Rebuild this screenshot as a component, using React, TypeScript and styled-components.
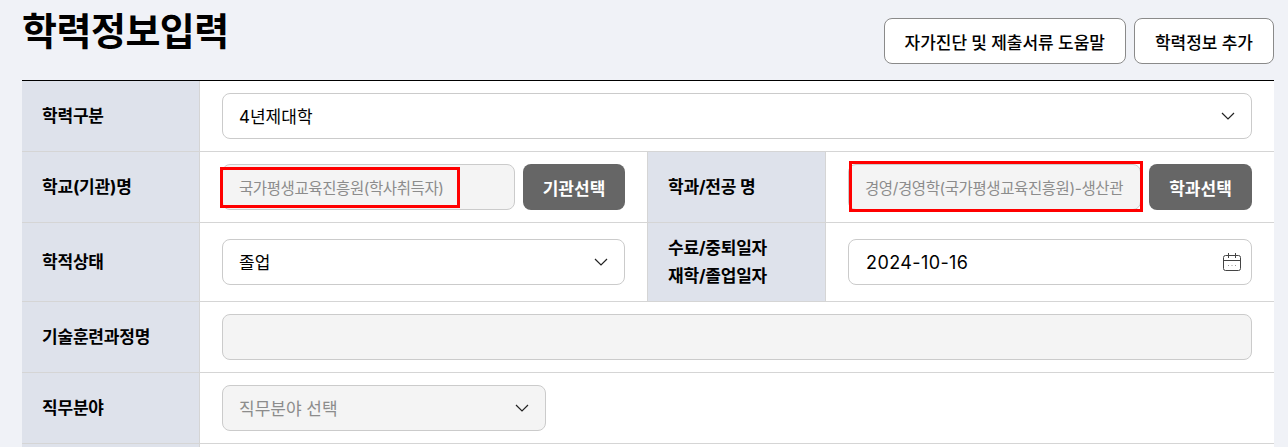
import { FC, ReactNode } from "react";
import styled, { createGlobalStyle } from "styled-components";

const Chevron: FC = () => (
  <svg width="14" height="8" viewBox="0 0 14 8" fill="none">
    <path d="M1 1l6 6 6-6" stroke="#222" strokeWidth="1.2" />
  </svg>
);

const CalendarIcon: FC = () => (
  <IconSlot>
    <svg width="18" height="20" viewBox="0 0 18 20" fill="none">
      <rect x="0.5" y="3.5" width="17" height="15" rx="2" stroke="#444" />
      <path d="M0.5 8.5h17M5.5 1v5M12.5 1v5" stroke="#444" />
      <path d="M5 13.5h1M8.5 13.5h1M12 13.5h1" stroke="#999" />
    </svg>
  </IconSlot>
);

type SelectProps = { children: ReactNode; disabled?: boolean; width?: number };

const Select: FC<SelectProps> = ({ children, disabled, width }) => (
  <Field $disabled={disabled} $spread $large style={width ? { flex: `0 0 ${width}px` } : undefined}>
    <SelectText>{children}</SelectText>
    <Chevron />
  </Field>
);

const App: FC = () => (
  <Page>
    <GlobalStyle />
    <Header>
      <Title>학력정보입력</Title>
      <Actions>
        <OutlineButton>자가진단 및 제출서류 도움말</OutlineButton>
        <OutlineButton>학력정보 추가</OutlineButton>
      </Actions>
    </Header>
    <Table>
      <Row>
        <Label>학력구분</Label>
        <Cell>
          <Select>4년제대학</Select>
        </Cell>
      </Row>
      <Row>
        <Label>학교(기관)명</Label>
        <HalfCell>
          <Field $disabled>
            국가평생교육진흥원(학사취득자)
            <SchoolMark />
          </Field>
          <DarkButton>기관선택</DarkButton>
        </HalfCell>
        <Label>학과/전공 명</Label>
        <Cell>
          <Field $disabled>
            경영/경영학(국가평생교육진흥원)-생산관
            <MajorMark />
          </Field>
          <DarkButton $wide>학과선택</DarkButton>
        </Cell>
      </Row>
      <Row>
        <Label>학적상태</Label>
        <HalfCell $tall>
          <Select>졸업</Select>
        </HalfCell>
        <Label>
          수료/중퇴일자
          <br />
          재학/졸업일자
        </Label>
        <Cell $tall>
          <Field $spread>
            <DateText>2024-10-16</DateText>
            <CalendarIcon />
          </Field>
        </Cell>
      </Row>
      <Row>
        <Label>기술훈련과정명</Label>
        <Cell>
          <Field $disabled />
        </Cell>
      </Row>
      <Row>
        <Label>직무분야</Label>
        <Cell>
          <Select disabled width={324}>
            직무분야 선택
          </Select>
        </Cell>
      </Row>
      <Row>
        <Label />
        <Cell />
      </Row>
    </Table>
  </Page>
);

const GlobalStyle = createGlobalStyle`
  html, body {
    margin: 0;
    height: 100%;
    overflow: hidden;
    background: #f0f2f7;
  }
  body {
    font-family: "Inter", "Noto Sans CJK KR", sans-serif;
    color: #000;
  }
`;

const Page = styled.div`
  padding: 0 14px 0 22px;
`;

const Header = styled.div`
  display: flex;
  justify-content: space-between;
  height: 80px;
`;

const Title = styled.h1`
  margin: 0;
  padding-top: 5px;
  font-size: 38px;
  line-height: 52px;
  font-weight: 700;
  letter-spacing: -0.5px;
`;

const Actions = styled.div`
  display: flex;
  gap: 8px;
  padding-top: 18px;
`;

const OutlineButton = styled.div`
  display: flex;
  align-items: center;
  height: 46px;
  box-sizing: border-box;
  padding: 0 20px;
  border: 1px solid #8a8a8a;
  border-radius: 8px;
  background: #fff;
  font-size: 17px;
  font-weight: 500;
  word-spacing: -0.3px;
`;

const Table = styled.div`
  border-top: 1px solid #000;
  background: #fff;
`;

const Row = styled.div`
  display: flex;
  border-bottom: 1px solid #d5d5d5;
`;

const Label = styled.div`
  flex: 0 0 178px;
  box-sizing: border-box;
  display: flex;
  align-items: center;
  padding-left: 20px;
  background: #dee2eb;
  border-right: 1px solid #d5d5d5;
  font-size: 17px;
  font-weight: 700;
  letter-spacing: -0.2px;
  line-height: 28px;
`;

const Cell = styled.div<{ $tall?: boolean }>`
  flex: 1;
  min-width: 0;
  display: flex;
  gap: 8px;
  padding: ${(p) => (p.$tall ? "16px" : "12px")} 22px;
`;

const HalfCell = styled(Cell)`
  flex: 0 0 448px;
  box-sizing: border-box;
  border-right: 1px solid #d5d5d5;
`;

const Field = styled.div<{ $disabled?: boolean; $spread?: boolean; $large?: boolean }>`
  position: relative;
  flex: 1;
  min-width: 0;
  height: 46px;
  box-sizing: border-box;
  display: flex;
  align-items: center;
  justify-content: ${(p) => (p.$spread ? "space-between" : "flex-start")};
  padding: 0 16px;
  border: 1px solid #cbcbcb;
  border-radius: 8px;
  background: ${(p) => (p.$disabled ? "#f4f4f4" : "#fff")};
  color: ${(p) => (p.$disabled ? "#8c8c8c" : "#000")};
  font-size: ${(p) => (p.$large ? "17px" : "15.5px")};
  letter-spacing: ${(p) => (p.$large ? "0" : "-0.4px")};
  white-space: nowrap;
`;

const SelectText = styled.span`
  padding-bottom: 2px;
`;

const DateText = styled.span`
  padding-left: 1px;
  font-size: 18px;
  letter-spacing: 0.4px;
`;

const IconSlot = styled.span`
  display: flex;
  margin-right: -6px;
`;

const DarkButton = styled.div<{ $wide?: boolean }>`
  flex: 0 0 ${(p) => (p.$wide ? "103px" : "102px")};
  display: flex;
  align-items: center;
  justify-content: center;
  height: 46px;
  border-radius: 8px;
  background: #666;
  color: #fff;
  font-size: 17px;
  font-weight: 700;
`;

const SchoolMark = styled.div`
  position: absolute;
  left: -3px;
  top: 2px;
  width: 240px;
  height: 41px;
  box-sizing: border-box;
  border: 3px solid #f00;
`;

const MajorMark = styled.div`
  position: absolute;
  left: 0;
  top: -4px;
  width: 294px;
  height: 51px;
  box-sizing: border-box;
  border: 3px solid #f00;
`;

export default App;
